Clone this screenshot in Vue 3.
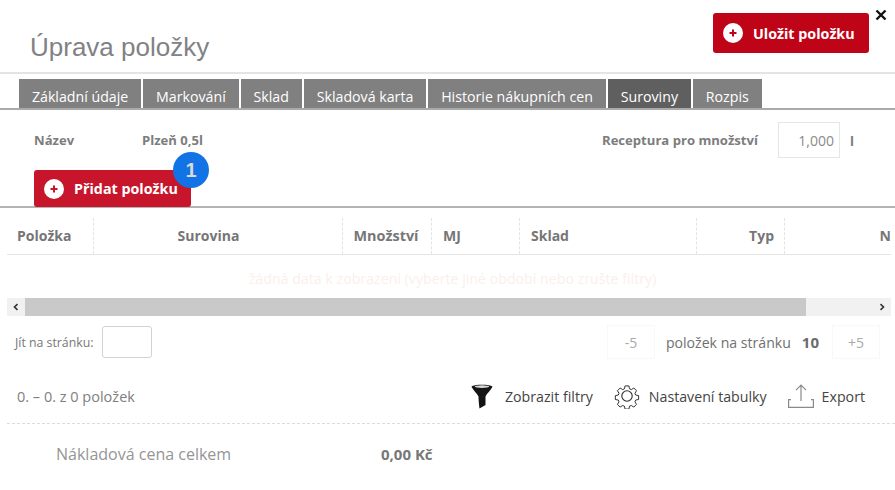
<template>
  <div class="dialog">
    <button class="close-btn" aria-label="Zavřít">
      <svg width="12" height="12" viewBox="0 0 12 12"><path d="M1.5 1.5l9 9M10.5 1.5l-9 9" stroke="#111" stroke-width="2.4" fill="none" /></svg>
    </button>

    <header class="head">
      <h1 class="title">Úprava položky</h1>
      <button class="red-btn save-btn">
        <span class="plus"><svg width="8" height="8" viewBox="0 0 8 8"><path d="M4 .5v7M.5 4h7" stroke="currentColor" stroke-width="2" /></svg></span>
        Uložit položku
      </button>
    </header>

    <nav class="tabs">
      <span v-for="tab in tabs" :key="tab" class="tab" :class="{ active: tab === 'Suroviny' }">{{ tab }}</span>
    </nav>

    <section class="form">
      <div class="form-row">
        <span class="lbl name-lbl">Název</span>
        <span class="lbl">Plzeň 0,5l</span>
        <span class="lbl recipe-lbl">Receptura pro množství</span>
        <span class="qty">1,000</span>
        <span class="lbl unit">l</span>
      </div>
      <div class="add-wrap">
        <button class="red-btn add-btn">
          <span class="plus"><svg width="8" height="8" viewBox="0 0 8 8"><path d="M4 .5v7M.5 4h7" stroke="currentColor" stroke-width="2" /></svg></span>
          Přidat položku
        </button>
        <span class="badge">1</span>
      </div>
    </section>

    <section class="table">
      <div class="thead">
        <div v-for="col in cols" :key="col.name" class="th" :class="col.cls">{{ col.name }}</div>
      </div>
      <div class="empty">žádná data k zobrazení (vyberte jiné období nebo zrušte filtry)</div>
      <div class="scrollbar">
        <span class="arrow">
          <svg width="8" height="8" viewBox="0 0 8 8"><path d="M5.5 1.2L2.5 4l3 2.8" stroke="#333" stroke-width="1.6" fill="none" /></svg>
        </span>
        <span class="thumb"></span>
        <span class="track"></span>
        <span class="arrow">
          <svg width="8" height="8" viewBox="0 0 8 8"><path d="M2.5 1.2L5.5 4l-3 2.8" stroke="#333" stroke-width="1.6" fill="none" /></svg>
        </span>
      </div>
    </section>

    <div class="pager">
      <span class="goto">Jít na stránku:</span>
      <span class="goto-input"></span>
      <span class="step step-minus">-5</span>
      <span class="per-page">položek na stránku</span>
      <b class="per-num">10</b>
      <span class="step">+5</span>
    </div>

    <div class="tools">
      <span class="count">0. – 0. z 0 položek</span>
      <span class="tool filter-tool">
        <svg width="22" height="26" viewBox="0 0 22 26">
          <path d="M0.5 3.5C3 1 19 1 21.5 3.5C21.5 5 15.5 11 14.5 13.5L14.5 22L8.5 25.5C8 22 7.5 16 7.5 13.5C6.5 11 0.5 5 0.5 3.5Z" fill="#141414" />
          <ellipse cx="11" cy="3.6" rx="7.4" ry="1.3" fill="#d8d8d8" />
        </svg>
        Zobrazit filtry
      </span>
      <span class="tool gear-tool">
        <svg width="26" height="26" viewBox="0 0 26 26" fill="none" stroke="#2b2b2b" stroke-width="1.1" stroke-linejoin="round">
          <circle cx="13" cy="13" r="5.2" />
          <path d="M10.8 1.5h4.4l.7 3.3 2 .9 2.9-1.8 3.1 3.1-1.8 2.9.8 2 3.4.7v4.4l-3.4.7-.8 2 1.8 2.9-3.1 3.1-2.9-1.8-2 .8-.7 3.3h-4.4l-.7-3.3-2-.8-2.9 1.8-3.1-3.1 1.8-2.9-.8-2-3.4-.7v-4.4l3.4-.7.8-2-1.8-2.9 3.1-3.1 2.9 1.8 2-.9z" transform="translate(1.6 1.6) scale(.875)" />
        </svg>
        Nastavení tabulky
      </span>
      <span class="tool export-tool">
        <svg width="26" height="25" viewBox="0 0 26 25" fill="none" stroke="#8a8a8a" stroke-width="1.2">
          <path d="M3 15.6H.6V23.4H25.4V15.6H23" />
          <path d="M13 17V1.2M8 6.2l5-5 5 5" />
        </svg>
        Export
      </span>
    </div>

    <div class="total">
      <span class="total-lbl">Nákladová cena celkem</span>
      <b class="total-val">0,00 Kč</b>
    </div>
  </div>
</template>

<script setup>
const tabs = ['Základní údaje', 'Markování', 'Sklad', 'Skladová karta', 'Historie nákupních cen', 'Suroviny', 'Rozpis']

const cols = [
  { name: 'Položka', cls: 'c-item' },
  { name: 'Surovina', cls: 'c-name' },
  { name: 'Množství', cls: 'c-center' },
  { name: 'MJ', cls: 'c-left' },
  { name: 'Sklad', cls: 'c-left' },
  { name: 'Typ', cls: 'c-right' },
  { name: 'N', cls: 'c-last' }
]
</script>

<style>
html, body {
  margin: 0;
  background: #fff;
  overflow: hidden;
}
</style>

<style scoped>
.dialog {
  position: relative;
  width: 895px;
  height: 490px;
  overflow: hidden;
  font-family: "Open Sans", "Noto Sans", sans-serif;
  color: #777;
  background: #fff;
}

.close-btn {
  position: absolute;
  top: 9px;
  right: 8px;
  width: 12px;
  height: 12px;
  padding: 0;
  border: 0;
  background: none;
  line-height: 0;
}

.head {
  display: flex;
  justify-content: space-between;
  height: 74px;
  padding: 13px 26px 0 30px;
  box-sizing: border-box;
  border-bottom: 2px solid #e4e4e4;
}

.title {
  margin: 18px 0 0;
  font: 400 26px/32px "Liberation Sans", Arial, sans-serif;
  color: #808285;
}

.red-btn {
  display: flex;
  align-items: center;
  border: 0;
  border-radius: 3px;
  color: #fff;
  font-family: "Open Sans", sans-serif;
  font-weight: 700;
  box-sizing: border-box;
}

.plus {
  display: flex;
  align-items: center;
  justify-content: center;
  width: 20px;
  height: 20px;
  border-radius: 50%;
  background: #fff;
}

.save-btn {
  width: 156px;
  height: 40px;
  padding: 0 0 0 10px;
  gap: 10px;
  background: #c00418;
  font-size: 14.3px;
}

.save-btn .plus {
  color: #c00418;
}

.tabs {
  display: flex;
  gap: 2px;
  height: 36px;
  padding: 5px 0 0 19px;
  box-sizing: border-box;
  border-bottom: 2px solid #aaa;
}

.tab {
  padding: 0 12.9px;
  background: #808080;
  color: #fff;
  font-size: 14.2px;
  line-height: 35px;
  height: 29px;
  white-space: nowrap;
}

.tab.active {
  background: #5f5f5f;
}

.form {
  height: 98px;
  box-sizing: border-box;
  padding: 12px 0 0 34px;
  border-bottom: 2px solid #b4b4b4;
}

.form-row {
  display: flex;
  align-items: center;
  height: 36px;
}

.lbl {
  font-size: 13.1px;
  font-weight: 700;
  color: #7d7d7d;
}

.name-lbl {
  width: 108px;
}

.recipe-lbl {
  margin-left: auto;
  margin-right: 20px;
}

.qty {
  width: 62px;
  height: 36px;
  padding-right: 5px;
  border: 1px solid #e6e6e6;
  box-sizing: border-box;
  font-size: 14px;
  font-weight: 400;
  line-height: 35px;
  text-align: right;
  color: #8a8a8a;
}

.unit {
  margin: 2px 41px 0 10px;
}

.add-wrap {
  position: relative;
  width: 157px;
  margin-top: 12px;
}

.add-btn {
  width: 157px;
  height: 37px;
  padding: 0 0 0 10px;
  gap: 10px;
  background: #c7162b;
  font-size: 14.3px;
}

.add-btn .plus {
  color: #c7162b;
}

.badge {
  position: absolute;
  top: -18px;
  left: 139px;
  width: 36px;
  height: 36px;
  border-radius: 50%;
  background: #1273e6;
  color: #d9d9d9;
  font: 700 20px/36px "Liberation Sans", Arial, sans-serif;
  text-align: center;
}

.table {
  padding: 10px 4px 0 7px;
}

.thead {
  display: grid;
  grid-template-columns: 87px 249px 89px 88px 177px 88px 106px;
  height: 37px;
  border-bottom: 1px solid #e5e5e5;
  box-sizing: border-box;
}

.th {
  border-right: 1px dashed #e3e3e3;
  font-size: 14px;
  font-weight: 700;
  line-height: 36px;
  color: #767676;
  white-space: nowrap;
}

.c-item {
  padding-left: 10px;
}

.c-name {
  padding-right: 19px;
  text-align: center;
}

.c-center {
  padding-right: 2px;
  font-size: 14.4px;
  text-align: center;
}

.c-left {
  padding-left: 11px;
}

.c-right {
  padding-right: 10px;
  text-align: right;
}

.c-last {
  border-right: 0;
  text-align: right;
}

.empty {
  height: 44px;
  padding: 14px 0 0 7px;
  box-sizing: border-box;
  font-size: 14.2px;
  line-height: 19px;
  text-align: center;
  color: #fbefec;
}

.scrollbar {
  display: flex;
  height: 18px;
  margin-top: -1px;
  background: #f1f1f1;
}

.arrow {
  display: flex;
  align-items: center;
  justify-content: center;
  width: 18px;
  flex: none;
}

.thumb {
  width: 781px;
  background: #c9c9c9;
}

.track {
  flex: 1;
}

.pager {
  display: flex;
  align-items: center;
  height: 36px;
  margin-top: 8px;
  padding: 0 15px 0 15px;
  font-size: 12.3px;
}

.goto {
  width: 87px;
  color: #777;
}

.goto-input {
  width: 50px;
  height: 32px;
  border: 1px solid #d2d2d2;
  border-radius: 3px;
  box-sizing: border-box;
}

.step {
  display: flex;
  align-items: center;
  justify-content: center;
  width: 48px;
  height: 34px;
  border: 1px solid #f8f8f8;
  box-sizing: border-box;
  color: #a9a9a9;
  font-size: 14px;
}

.step-minus {
  margin-left: auto;
}

.per-page {
  margin-left: 11px;
  font-size: 14.1px;
  color: #707070;
}

.per-num {
  margin: 0 13px 0 11px;
  font-size: 15px;
  color: #6a6a6a;
}

.tools {
  display: flex;
  align-items: center;
  height: 40px;
  margin: 16px 0 7px;
  padding: 0 30px 0 17px;
  font-size: 14.2px;
}

.count {
  margin-right: auto;
  font-size: 14.5px;
  color: #808080;
}

.tool {
  display: flex;
  align-items: center;
  color: #444;
}

.filter-tool {
  gap: 12px;
}

.gear-tool {
  gap: 9px;
  margin-left: 21px;
}

.export-tool {
  gap: 8px;
  margin-left: 21px;
}

.total {
  display: flex;
  align-items: center;
  height: 60px;
  margin: 0 0 0 7px;
  border-top: 1px dashed #dcdcdc;
  padding-left: 49px;
  box-sizing: border-box;
  width: 888px;
}

.total-lbl {
  width: 325px;
  font-size: 16px;
  color: #959595;
}

.total-val {
  font-size: 15px;
  color: #777;
}
</style>
